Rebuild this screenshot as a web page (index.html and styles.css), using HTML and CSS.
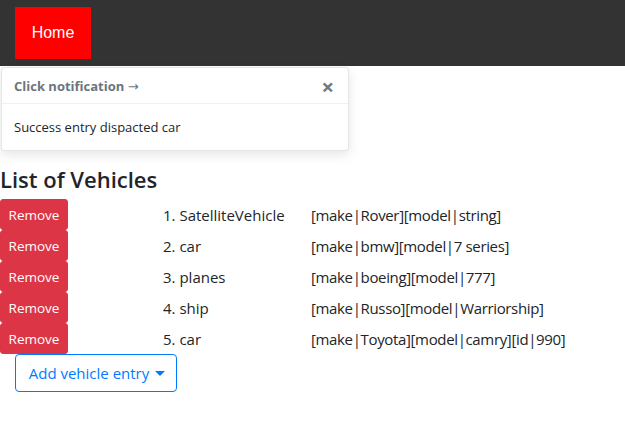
FILE: index.html
```html
<!DOCTYPE html>
<html>
<head>
<meta charset="utf-8">
<link rel="stylesheet" href="styles.css">
</head>
<body>
<nav class="navbar">
  <a class="home" href="#">Home</a>
</nav>
<div class="toast">
  <div class="toast-header">
    <strong>Click notification <span class="arrow">→</span></strong>
    <span class="close">&times;</span>
  </div>
  <div class="toast-body">Success entry dispacted car</div>
</div>
<h4 class="title">List of Vehicles</h4>
<div class="list">
  <div class="row"><button class="btn-remove">Remove</button><span class="name">1. SatelliteVehicle</span><span class="props">[make|Rover][model|string]</span></div>
  <div class="row"><button class="btn-remove">Remove</button><span class="name">2. car</span><span class="props">[make|bmw][model|7 series]</span></div>
  <div class="row"><button class="btn-remove">Remove</button><span class="name">3. planes</span><span class="props">[make|boeing][model|777]</span></div>
  <div class="row"><button class="btn-remove">Remove</button><span class="name">4. ship</span><span class="props">[make|Russo][model|Warriorship]</span></div>
  <div class="row"><button class="btn-remove">Remove</button><span class="name">5. car</span><span class="props">[make|Toyota][model|camry][id|990]</span></div>
</div>
<button class="btn-add">Add vehicle entry<span class="caret"></span></button>
</body>
</html>
```
FILE: styles.css
```css
* { box-sizing: border-box; }
body {
  margin: 0;
  font-family: "Open Sans", "Noto Sans", sans-serif;
  font-size: 15px;
  color: #212529;
  background: #fff;
}
.navbar {
  background: #333333;
  height: 66px;
  padding: 7px 15px;
}
.home {
  display: flex;
  align-items: center;
  justify-content: center;
  width: 76px;
  height: 52px;
  background: #ff0000;
  color: #fff;
  text-decoration: none;
  font-family: "Liberation Sans", Arial, sans-serif;
  font-size: 16px;
}
.toast {
  margin: 1px 0 0 1px;
  width: 348px;
  background: #fff;
  border: 1px solid rgba(0,0,0,0.1);
  border-radius: 4px;
  box-shadow: 0 4px 12px rgba(0,0,0,0.1);
  font-size: 13px;
}
.toast-header {
  display: flex;
  align-items: center;
  justify-content: space-between;
  height: 36px;
  padding: 0 12px;
  border-bottom: 1px solid rgba(0,0,0,0.06);
  color: #6c757d;
}
.toast-header strong { font-weight: 700; }
.arrow { font-weight: 400; font-family: "DejaVu Sans", sans-serif; font-size: 13px; }
.close {
  font-size: 22px;
  font-weight: 700;
  color: #777;
  line-height: 1;
  margin-right: 2px;
}
.toast-body {
  padding: 13px 12px 12px;
  line-height: 21px;
}
.title {
  margin: 14px 0 5px;
  font-size: 22px;
  font-weight: 600;
  line-height: 29px;
}
.row {
  display: grid;
  grid-template-columns: 163px 148px auto;
  align-items: center;
  height: 31px;
}
.btn-remove {
  width: 68px;
  height: 31px;
  padding: 0;
  border: 1px solid #dc3545;
  border-radius: 3px;
  background: #dc3545;
  color: #fff;
  font-family: inherit;
  font-size: 13.5px;
}
.name { font-size: 15px; }
.props { font-size: 15px; letter-spacing: -0.35px; }
.btn-add {
  margin: 0 0 0 15px;
  width: 162px;
  height: 38px;
  border: 1px solid #007bff;
  border-radius: 4px;
  background: #fff;
  color: #007bff;
  font-family: inherit;
  font-size: 15px;
  padding: 0 0 0 2px;
}
.caret {
  display: inline-block;
  margin-left: 6px;
  vertical-align: 3px;
  border-top: 5px solid #007bff;
  border-left: 5px solid transparent;
  border-right: 5px solid transparent;
}
```
